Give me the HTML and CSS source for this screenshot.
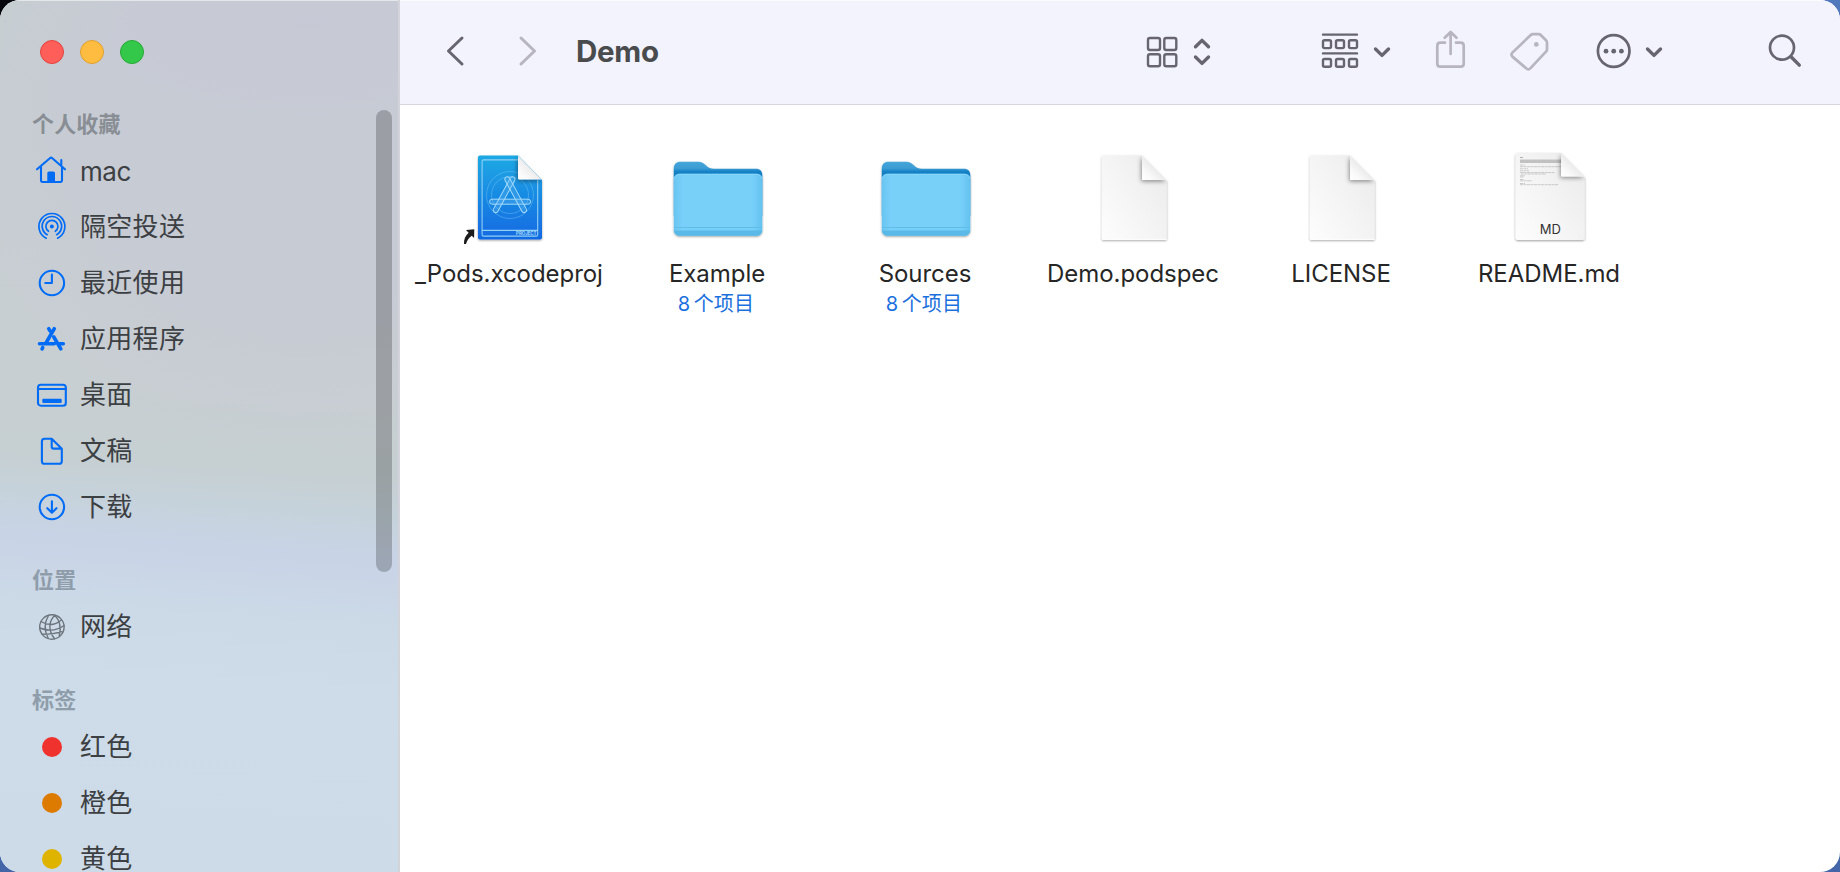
FILE: index.html
```
<!DOCTYPE html>
<html lang="zh-CN">
<head>
<meta charset="utf-8">
<title>Demo</title>
<link rel="stylesheet" href="styles.css">
</head>
<body>
<svg width="0" height="0" class="defs">
  <defs>
    <linearGradient id="xc" x1="0" y1="0" x2="0" y2="1"><stop offset="0" stop-color="#1fa9e4"/><stop offset="1" stop-color="#1169e2"/></linearGradient>
    <linearGradient id="fold" x1="0" y1="1" x2=".6" y2=".4"><stop offset="0" stop-color="#ffffff"/><stop offset=".35" stop-color="#fafafa"/><stop offset="1" stop-color="#e6e6e6"/></linearGradient>
    <linearGradient id="paper" x1="0" y1="1" x2="1" y2="0.2"><stop offset="0" stop-color="#fdfdfd"/><stop offset="1" stop-color="#ececec"/></linearGradient>
    <linearGradient id="back" x1="0" y1="0" x2="0" y2="1"><stop offset="0" stop-color="#45a5d8"/><stop offset=".12" stop-color="#3c9dd4"/><stop offset=".19" stop-color="#147fc4"/><stop offset="1" stop-color="#3796cf"/></linearGradient>
    <linearGradient id="front" x1="0" y1="0" x2="1" y2="0"><stop offset="0" stop-color="#68c4f0"/><stop offset=".1" stop-color="#78d0f9"/><stop offset=".88" stop-color="#78d0f9"/><stop offset="1" stop-color="#64c2ef"/></linearGradient>
    <filter id="soft" x="-20%" y="-20%" width="140%" height="140%"><feDropShadow dx="0" dy="1" stdDeviation="1" flood-color="#000" flood-opacity=".38"/></filter>
    <filter id="curl" x="-50%" y="-50%" width="200%" height="200%"><feDropShadow dx="-.8" dy="1.500" stdDeviation="2" flood-color="#000" flood-opacity=".42"/></filter>
    <clipPath id="pageclip"><path d="M29 10.500H69L94 36V95H29Z"/></clipPath>
    <clipPath id="mdclip"><path d="M26.500 8H72L96 32.500V95H26.500Z"/></clipPath>
    <symbol id="folder" viewBox="0 0 120 100">
      <g filter="url(#soft)">
        <path fill="url(#back)" d="M16.800 24c0-5 2.500-7.300 7-7.300h17c4 0 5.500 1.300 8 3.500 3 2.700 4.500 3.500 8 3.500h42c4.500 0 6.500 2.300 6.500 7v40H16.800z"/>
        <path fill="url(#front)" d="M16.800 35c0-4 2-6.200 6-6.200h76.500c4 0 6 2.200 6 6.200v49.500c0 4-2.500 6.300-6.500 6.300H23.300c-4 0-6.500-2.300-6.500-6.300z"/>
      </g>
      <path fill="#5ab9e6" d="M16.800 85.500h88.500c-.3 3.300-2.800 5.300-6.500 5.300H23.300c-3.700 0-6.200-2-6.500-5.300z"/>
      <path stroke="#5fbde8" stroke-width="1" d="M17 82.500h88"/>
      <path stroke="#8bdafc" stroke-width=".8" fill="none" d="M17.500 33.500c.6-3 2.400-4.200 5.300-4.200h76.500c2.900 0 4.700 1.200 5.300 4.200"/>
    </symbol>
    <symbol id="page" viewBox="0 0 120 100">
      <path filter="url(#soft)" fill="url(#paper)" d="M30.500 10.500H69L93.700 35.500V93.500c0 .8-.5 1.300-1.300 1.300H30.200c-.8 0-1.300-.5-1.300-1.300V12c0-1 .6-1.500 1.600-1.500z"/>
      <path stroke="#fff" stroke-width="1" d="M29.500 94.300h64"/>
      <path clip-path="url(#pageclip)" filter="url(#curl)" fill="url(#fold)" d="M69 10.500L93.700 35H70.500c-1 0-1.500-.5-1.500-1.500z"/>
    </symbol>
  </defs>
</svg>

<div class="window">
  <aside class="sidebar">
    <div class="lights"><i class="light close"></i><i class="light mini"></i><i class="light zoom"></i></div>

    <section class="group">
      <h2 class="heading">个人收藏</h2>
      <div class="row"><svg class="icon" viewBox="0 0 36 36"><path d="M3 16.300L15.900 5.200q1.200-1 2.400 0L31 16.300M7 14v13.300q0 1.700 1.700 1.700h17.600q1.700 0 1.700-1.700V14M27.300 7v5"/><path class="solid" d="M13.300 29v-9q0-1.600 1.600-1.600h4.500q1.600 0 1.600 1.600v9z"/></svg><span class="latin">mac</span></div>
      <div class="row"><svg class="icon thin" viewBox="0 0 36 36"><path d="M12.200 29.200a13 13 0 1 1 11.400 0M13.200 25.700a9.700 9.700 0 1 1 9.400 0M14.500 22.300a6 6 0 1 1 6.800 0"/><circle class="solid" cx="17.900" cy="17.500" r="2"/></svg><span>隔空投送</span></div>
      <div class="row"><svg class="icon" viewBox="0 0 36 36"><circle cx="17.900" cy="18" r="12.200"/><path d="M17.900 9.500V18h-6.600"/></svg><span>最近使用</span></div>
      <div class="row"><svg class="icon bold" viewBox="0 0 36 36"><path d="M20.300 7.700L11.700 22.500M14.700 7.700l1.300 2.200M19.800 16l7 11.800M8.700 26.700l-.6 1.100M5.500 22.700h14.800M25.500 22.700h3.800"/></svg><span>应用程序</span></div>
      <div class="row"><svg class="icon" viewBox="0 0 36 36"><rect x="4" y="7.700" width="27.800" height="21" rx="2.800"/><path d="M4 12h28"/><rect class="solid" x="8.300" y="21.800" width="19.400" height="4.300" rx="1"/></svg><span>桌面</span></div>
      <div class="row"><svg class="icon" viewBox="0 0 36 36"><path d="M10.500 5.700h7.200L27.800 15.800v12.400q0 2.600-2.600 2.600H10.500q-2.600 0-2.600-2.600V8.300q0-2.600 2.600-2.600zM17.700 6v7.800q0 1.800 1.800 1.800h8"/></svg><span>文稿</span></div>
      <div class="row"><svg class="icon" viewBox="0 0 36 36"><circle cx="17.900" cy="18" r="12.200"/><path d="M17.900 12.200v11.300M13.300 19.200l4.600 4.500 4.600-4.500"/></svg><span>下载</span></div>
    </section>

    <section class="group">
      <h2 class="heading cool">位置</h2>
      <div class="row"><svg class="icon gray" viewBox="0 0 36 36"><circle cx="17.900" cy="18" r="12.200"/><path d="M20.800 6.200c-6 6-7 15-.3 23.500M14.500 6.500c-4.500 7.500-4 15.500-.5 22.300M20.800 6.200c5 5 6.500 12 4.500 20.500M7 12.500c7 4.300 14 4 20.300-1.500M5.800 19c8.500 3.300 17 2.800 24.200-2.500M8.300 25.300c6.500 0 13-.6 19.500-2.600" /></svg><span>网络</span></div>
    </section>

    <section class="group last">
      <h2 class="heading cool">标签</h2>
      <div class="row"><i class="dot red"></i><span>红色</span></div>
      <div class="row"><i class="dot orange"></i><span>橙色</span></div>
      <div class="row"><i class="dot yellow"></i><span>黄色</span></div>
    </section>
    <div class="scrollbar"></div>
  </aside>

  <main class="main">
    <header class="toolbar">
      <svg class="tool back" width="40" height="40"><path d="M22 6L8.500 19 22 32"/></svg>
      <svg class="tool forward dim" width="40" height="40"><path d="M11 6l13.500 13L11 32"/></svg>
      <h1 class="title">Demo</h1>
      <svg class="tool view" width="80" height="40"><g class="fine"><rect x="8" y="6" width="12" height="12" rx="2"/><rect x="24.300" y="6" width="12" height="12" rx="2"/><rect x="8" y="22.300" width="12" height="12" rx="2"/><rect x="24.300" y="22.300" width="12" height="12" rx="2"/></g><path class="heavy" d="M55.500 14.800L62 8.400l6.500 6.400M55.500 25l6.500 6.400 6.500-6.400"/></svg>
      <svg class="tool arrange" width="80" height="40"><g class="fine"><path d="M7 2.600h34M7 21.400h34"/><rect x="7" y="8.300" width="8" height="7.800" rx="1.500"/><rect x="20" y="8.300" width="8" height="7.800" rx="1.500"/><rect x="33" y="8.300" width="8" height="7.800" rx="1.500"/><rect x="7" y="27" width="8" height="7.800" rx="1.500"/><rect x="20" y="27" width="8" height="7.800" rx="1.500"/><rect x="33" y="27" width="8" height="7.800" rx="1.500"/></g><path class="heavy" d="M59.500 17l6.500 6.400 6.500-6.400"/></svg>
      <svg class="tool share dim" width="40" height="40"><path d="M15 10.700H10.300q-3 0-3 3v18q0 3 3 3h20.400q3 0 3-3v-18q0-3-3-3H26M20.600 22V.4M14.700 5.800L20.600 0l5.900 5.800"/></svg>
      <svg class="tool tag dim" width="50" height="40"><path d="M28 2.200h5.500q1.500 0 2.500 1l5 5q1 1 1 2.500v6.500q0 1.500-1 2.500L25.300 36.400q-2 2-4 0L7.400 24.600q-2-2 0-4L25.500 3.200q1-1 2.500-1z"/><circle class="solid" cx="31.300" cy="12.400" r="2.400"/></svg>
      <svg class="tool more" width="80" height="40"><circle cx="23.700" cy="19" r="15.800"/><g class="solid"><circle cx="16" cy="19.200" r="2.400"/><circle cx="23.700" cy="19.200" r="2.400"/><circle cx="31.400" cy="19.200" r="2.400"/></g><path class="heavy" d="M57.500 17l6.500 6.400 6.500-6.400"/></svg>
      <svg class="tool search" width="40" height="40"><circle cx="17" cy="15.600" r="12"/><path class="heavy" d="M26 24.800l8.300 8.300"/></svg>
    </header>

    <div class="files">
      <div class="file">
        <svg class="thumb" viewBox="0 0 120 100">
          <path filter="url(#soft)" fill="url(#xc)" d="M31 10.500h38L93 35v57.500q0 2-2 2H31q-2 0-2-2v-80q0-2 2-2z"/>
          <g fill="none" stroke="#8fd0f5" stroke-width="1.100">
            <path d="M69 14.900H34.500q-1.400 0-1.400 1.400v73.400q0 1.400 1.400 1.400h52.800q1.400 0 1.400-1.400V35M33 85.400h55.700"/>
          </g>
          <g fill="none" stroke="#7cc8f4" stroke-width=".6" opacity=".7"><circle cx="61" cy="50" r="23.500"/><circle cx="61" cy="50" r="18.500"/></g>
          <g fill="#68b8f2" fill-opacity=".3" stroke="#a4dbfa" stroke-width="1">
            <rect x="40.600" y="54.200" width="41" height="5" rx="2.500"/>
            <rect x="52.600" y="29.700" width="5" height="40" rx="2.500" transform="rotate(28.500 55.100 49.700)"/>
            <rect x="64.200" y="29.700" width="5" height="40" rx="2.500" transform="rotate(-28.500 66.700 49.700)"/>
          </g>
          <text class="project" x="87.500" y="89.800" text-anchor="end">PROJECT</text>
          <path filter="url(#curl)" clip-path="url(#pageclip)" fill="url(#fold)" d="M69 10.500L93 34.500H70.500q-1.500 0-1.500-1.500z"/>
          <path fill="#1c1c1c" stroke="#fff" stroke-width="1" paint-order="stroke" d="M17 85l8.300-.7-.2 8.700-2.400-2.300c-3 2.300-4.500 4.600-5.700 8.300h-2c-.3-4.500 1.300-8.300 4.600-11.300z"/>
        </svg>
        <div class="name">_Pods.xcodeproj</div>
      </div>
      <div class="file">
        <svg class="thumb"><use href="#folder"/></svg>
        <div class="name">Example</div>
        <div class="count">8 个项目</div>
      </div>
      <div class="file">
        <svg class="thumb"><use href="#folder"/></svg>
        <div class="name">Sources</div>
        <div class="count">8 个项目</div>
      </div>
      <div class="file">
        <svg class="thumb"><use href="#page"/></svg>
        <div class="name">Demo.podspec</div>
      </div>
      <div class="file">
        <svg class="thumb"><use href="#page"/></svg>
        <div class="name">LICENSE</div>
      </div>
      <div class="file">
        <svg class="thumb" viewBox="0 0 120 100">
          <path filter="url(#soft)" fill="url(#paper)" d="M29 8H72L95.700 32V92.500q0 2.500-2.500 2.500H29q-2.500 0-2.500-2.500V10.500Q26.500 8 29 8z"/>
          <g stroke="#888" fill="none" stroke-width=".5" opacity=".8">
            <path d="M31 12.400h3" stroke="#333"/>
            <path stroke-width="3.600" stroke="#b5b5b5" d="M31 16.300h41"/>
            <path stroke-dasharray="3 .5" d="M31 20h5M31 21.700h41M31 23.800h8M31 25.800h9M31 27.600h35M32 29h25M31 30.800h5M31 32h4M31 34.500h4M31 35.800h12M31 38.500h5M31 39.700h38"/>
          </g>
          <path clip-path="url(#mdclip)" filter="url(#curl)" fill="url(#fold)" d="M72 8L95.700 31.500H73.500q-1.500 0-1.500-1.500z"/>
          <text class="kind" x="61.300" y="88.800" text-anchor="middle">MD</text>
        </svg>
        <div class="name">README.md</div>
      </div>
    </div>
  </main>
</div>
</body>
</html>
```
FILE: styles.css
```
* { box-sizing: border-box; }

body {
  margin: 0;
  width: 1840px;
  height: 872px;
  overflow: hidden;
  background:
    linear-gradient(#05070d, #05070d) 0 0 / 40px 40px no-repeat,
    linear-gradient(#4f78bd, #4466a8);
  font-family: Inter, "Noto Sans CJK SC", sans-serif;
}

.defs { position: absolute; }

.window {
  display: flex;
  width: 1840px;
  height: 872px;
  border-radius: 20px;
  overflow: hidden;
  background: #fff;
}

.sidebar {
  position: relative;
  flex: none;
  width: 400px;
  height: 872px;
  overflow: hidden;
  border-right: 2px solid #d3d3dc;
  box-shadow: inset 0 1px #e4e7ea;
  background:
    radial-gradient(ellipse 240px 100px at 310px 20px, rgba(199, 200, 213, .9), rgba(199, 200, 213, 0)),
    radial-gradient(ellipse 380px 330px at 300px 120px, #c7cbd4 55%, rgba(199, 203, 212, 0)),
    linear-gradient(176deg, #cddbe8 0, #cddce8 190px, #ccdae7 265px, #cad6e6 320px, #c8d4e6 350px, #c6d2da 395px, #c6cfd1 440px, #c8cfd2 510px, #c6cfd0 872px) 0 0 / 100% 0 no-repeat,
    linear-gradient(184deg, #c6cfd0 0, #c8cfd2 400px, #c6cfd1 470px, #c6d2da 515px, #c8d4e6 560px, #cad6e6 590px, #ccdae7 635px, #cddce8 700px, #cddbe8 890px);
}

.lights {
  display: flex;
  gap: 16px;
  height: 105px;
  padding: 40px 0 0 40px;
}

.light {
  width: 24px;
  height: 24px;
  border-radius: 50%;
  border: 1px solid;
}

.close { background: #ff5f58; border-color: #e2443f; }
.mini { background: #febc40; border-color: #dfa032; }
.zoom { background: #34c84a; border-color: #24a934; }

.group { margin-bottom: 26px; }
.last { margin-bottom: 0; }

.heading {
  margin: 0;
  padding-left: 32px;
  height: 38px;
  line-height: 38px;
  font-size: 22px;
  font-weight: 700;
  letter-spacing: .15px;
  color: #888e94;
}

.cool { color: #8f9dab; }

.row {
  display: flex;
  align-items: center;
  gap: 10px;
  height: 56px;
  padding-left: 34px;
  font-size: 26px;
  letter-spacing: .3px;
  color: #3c4043;
}

.row span { line-height: 30px; }

.row .latin {
  padding-top: 1px;
  letter-spacing: -.5px;
}

.icon {
  flex: none;
  width: 36px;
  height: 36px;
  fill: none;
  stroke: #006cf5;
  stroke-width: 2.1;
  stroke-linecap: round;
  stroke-linejoin: round;
}

.icon .solid { fill: #006cf5; stroke: none; }
.thin { stroke-width: 1.7; }
.bold { stroke-width: 3.6; }
.gray { stroke: #6c757d; stroke-width: 1.4; }

.dot {
  width: 20px;
  height: 20px;
  margin: 0 8px;
  border-radius: 50%;
}

.red { background: #f0322f; }
.orange { background: #dd7b00; }
.yellow { background: #dfb400; }

.scrollbar {
  position: absolute;
  left: 376px;
  top: 110px;
  width: 16px;
  height: 462px;
  border-radius: 8px;
  background: rgba(0, 0, 0, .22);
}

.main { flex: 1; }

.toolbar {
  display: flex;
  align-items: center;
  height: 105px;
  padding-left: 40px;
  background: #f2f3fc;
  border-bottom: 1px solid #d6d6dc;
  box-shadow: inset 0 1px #fbfbfe;
}

.tool {
  flex: none;
  overflow: visible;
  fill: none;
  stroke: #676670;
  stroke-width: 2.7;
  stroke-linecap: round;
  stroke-linejoin: round;
}

.tool .solid { fill: #676670; stroke: none; }
.tool .fine { stroke-width: 2.4; }
.tool .heavy { stroke-width: 3.4; }
.back, .forward { stroke-width: 3; }
.dim { stroke: #b6b5c0; }
.tool.dim .solid { fill: #b6b5c0; }

.forward { margin-left: 30px; }

.title {
  flex: none;
  width: 564px;
  margin: 0 0 0 26px;
  padding-bottom: 3px;
  font-size: 29.5px;
  font-weight: 700;
  letter-spacing: -.3px;
  color: #4a4b4d;
}

.arrange { margin-left: 96px; }
.share { margin-left: 34px; }
.tag { margin-left: 35px; }
.more { margin-left: 35px; }
.search { margin-left: 95px; }

.files {
  display: grid;
  grid-template-columns: repeat(6, 208px);
  padding: 40px 0 0 5px;
}

.file {
  display: flex;
  flex-direction: column;
  align-items: center;
}

.thumb { width: 120px; height: 100px; }

.name {
  margin-top: 13px;
  height: 32px;
  line-height: 32px;
  font-size: 24px;
  letter-spacing: -.05px;
  white-space: nowrap;
  color: #262626;
}

.count {
  height: 28px;
  line-height: 28px;
  margin-right: 2px;
  font-size: 20px;
  letter-spacing: .2px;
  word-spacing: -2.5px;
  white-space: nowrap;
  color: #1a70dc;
}

.project {
  font: 600 4.4px Inter, sans-serif;
  fill: #b5e0fb;
}

.kind {
  font: 400 13px Inter, sans-serif;
  fill: #333;
}
```
